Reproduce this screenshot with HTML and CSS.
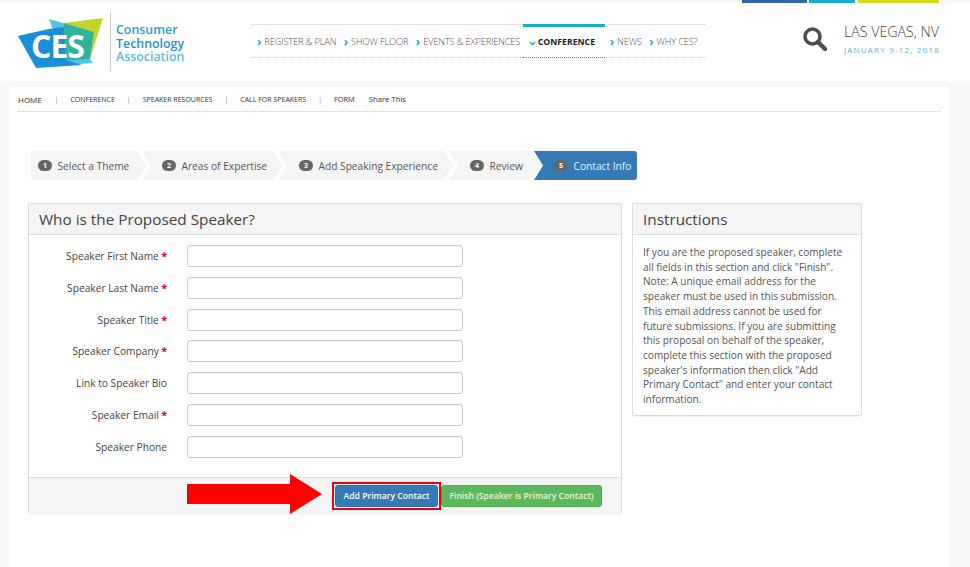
FILE: index.html
```html
<!DOCTYPE html>
<html lang="en">
<head>
    <meta charset="UTF-8">
    <meta name="viewport" content="width=device-width, initial-scale=1.0">
    <title>Call for Speakers - Contact Info</title>
    <link rel="stylesheet" href="styles.css">
</head>
<body>
    <div class="top-bars">
        <span class="bar bar-blue"></span>
        <span class="bar bar-teal"></span>
        <span class="bar bar-yellow"></span>
    </div>

    <header class="site-header">
        <div class="logo">
            <svg class="logo-mark" width="88" height="54" viewBox="0 0 88 54">
                <polygon points="31,1 76,14 72,41 75,45 48,47" fill="#56c2ea"/>
                <polygon points="46,5 85,0 72,41 76,14" fill="#c4d52a"/>
                <polygon points="46,5 76,14 72,41 48,42" fill="#2fb39a"/>
                <polygon points="0,18 31,11 46,9 48,42 64,47 18,50" fill="#1b8fd6"/>
                <text x="13" y="40" class="logo-ces">CES</text>
            </svg>
            <span class="logo-rule"></span>
            <div class="logo-name">
                <span class="name-1">Consumer</span>
                <span class="name-2">Technology</span>
                <span class="name-3">Association</span>
            </div>
        </div>

        <nav class="main-nav">
            <a href="#"><i>&rsaquo;</i>REGISTER &amp; PLAN</a>
            <a href="#"><i>&rsaquo;</i>SHOW FLOOR</a>
            <a href="#"><i>&rsaquo;</i>EVENTS &amp; EXPERIENCES</a>
            <a href="#" class="current"><svg width="7" height="5" viewBox="0 0 7 5"><path d="M1 1l2.5 2.5L6 1" fill="none" stroke="#19aecb" stroke-width="1.5"/></svg>CONFERENCE</a>
            <a href="#"><i>&rsaquo;</i>NEWS</a>
            <a href="#"><i>&rsaquo;</i>WHY CES?</a>
        </nav>

        <svg class="search-icon" width="26" height="26" viewBox="0 0 26 26">
            <circle cx="10.5" cy="10.5" r="7.5" fill="none" stroke="#4d4d4d" stroke-width="3.6"/>
            <path d="M16 16l7 7" stroke="#4d4d4d" stroke-width="4.4" stroke-linecap="round"/>
        </svg>

        <div class="event-info">
            <div class="event-city">LAS VEGAS, NV</div>
            <div class="event-date">JANUARY 9-12, 2018</div>
        </div>
    </header>

    <main class="content">
        <div class="breadcrumb">
            <a href="#" class="crumb-home">HOME</a><span>|</span>
            <a href="#">CONFERENCE</a><span>|</span>
            <a href="#">SPEAKER RESOURCES</a><span>|</span>
            <a href="#">CALL FOR SPEAKERS</a><span>|</span>
            <a href="#" class="crumb-form">FORM</a>
            <a href="#" class="crumb-share">Share This</a>
        </div>

        <ol class="steps">
            <li class="step step-first"><b>1</b>Select a Theme</li>
            <li class="step step-2"><b>2</b>Areas of Expertise</li>
            <li class="step step-3"><b>3</b>Add Speaking Experience</li>
            <li class="step step-4"><b>4</b>Review</li>
            <li class="step step-last"><b>5</b>Contact Info</li>
        </ol>

        <div class="columns">
            <section class="panel panel-form">
                <h2>Who is the Proposed Speaker?</h2>
                <form class="speaker-form">
                    <label>Speaker First Name <em>*</em></label><input type="text">
                    <label>Speaker Last Name <em>*</em></label><input type="text">
                    <label>Speaker Title <em>*</em></label><input type="text">
                    <label>Speaker Company <em>*</em></label><input type="text">
                    <label>Link to Speaker Bio</label><input type="text">
                    <label>Speaker Email <em>*</em></label><input type="text">
                    <label>Speaker Phone</label><input type="text">
                </form>
                <div class="panel-footer">
                    <svg class="red-arrow" width="135" height="40" viewBox="0 0 135 40">
                        <polygon points="0,10 103,10 103,0 135,20 103,40 103,30 0,30" fill="#fe0000"/>
                    </svg>
                    <span class="btn-highlight"><button type="button" class="btn btn-blue">Add Primary Contact</button></span>
                    <button type="button" class="btn btn-green">Finish (Speaker is Primary Contact)</button>
                </div>
            </section>

            <aside class="panel panel-help">
                <h2>Instructions</h2>
                <p>If you are the proposed speaker, complete all fields in this section and click "Finish". Note: A unique email address for the speaker must be used in this submission. This email address cannot be used for future submissions. If you are submitting this proposal on behalf of the speaker, complete this section with the proposed speaker's information then click "Add Primary Contact" and enter your contact information.</p>
            </aside>
        </div>
    </main>
</body>
</html>
```

FILE: styles.css
```css
* {
    box-sizing: border-box;
}
html, body {
    height: 100%;
}
body {
    margin: 0;
    height: 567px;
    overflow: hidden;
    background-color: #f8f8f8;
    font-family: "Open Sans", Arial, sans-serif;
    color: #444;
}

/* top colour strip */
.top-bars {
    display: flex;
    justify-content: flex-end;
    gap: 2px;
    height: 3px;
    padding-right: 31px;
}
.bar {
    height: 3px;
}
.bar-blue {
    width: 65px;
    background-color: #2f66ab;
}
.bar-teal {
    width: 46px;
    margin-right: 1px;
    background-color: #12aecb;
}
.bar-yellow {
    width: 81px;
    background-color: #d6db22;
}

/* header */
.site-header {
    display: flex;
    align-items: flex-start;
    height: 78px;
    background-color: #fff;
}
.logo {
    display: flex;
    width: 252px;
    padding: 15px 0 0 18px;
}
.logo-ces {
    font-family: "Open Sans", sans-serif;
    font-size: 32px;
    font-weight: 700;
    fill: #fff;
    letter-spacing: -1px;
}
.logo-rule {
    width: 1px;
    height: 59px;
    margin: -6px 5px 0 4px;
    background-color: #c9c9c9;
}
.logo-name {
    display: flex;
    flex-direction: column;
    padding-top: 5px;
    font-size: 12.4px;
    font-weight: 600;
    line-height: 13.5px;
}
.name-1 {
    color: #2f9ad6;
}
.name-2 {
    color: #2a8fd0;
}
.name-3 {
    color: #5cbcdf;
}

.main-nav {
    display: flex;
    width: 453px;
    height: 34px;
    margin-top: 21px;
    border-top: 1px dotted #c9c9c9;
    border-bottom: 1px dotted #c9c9c9;
    padding-left: 5px;
}
.main-nav a {
    display: flex;
    align-items: center;
    margin-right: 7.5px;
    font-size: 9.3px;
    font-weight: 300;
    letter-spacing: -.15px;
    color: #555;
    text-decoration: none;
    white-space: nowrap;
}
.main-nav i {
    margin-right: 3px;
    font-size: 12px;
    font-style: normal;
    font-weight: 700;
    color: #19aecb;
}
.main-nav .current {
    width: 86px;
    height: 34px;
    margin: -1px 5px -1px -5px;
    border-top: 3px solid #12aecb;
    border-bottom: 1px dotted #12aecb;
    padding-left: 6px;
    font-weight: 700;
    font-size: 8.7px;
    letter-spacing: 0;
    color: #222;
}
.main-nav .current svg {
    margin: 2px 2px 0 0;
}

.search-icon {
    margin: 23px 0 0 97px;
}
.event-info {
    margin: 20px 0 0 16px;
}
.event-city {
    font-size: 14.2px;
    font-weight: 300;
    line-height: 18px;
    color: #444;
    white-space: nowrap;
}
.event-date {
    margin-top: 3px;
    font-size: 8px;
    letter-spacing: 1.2px;
    line-height: 11px;
    color: #5db5c8;
    white-space: nowrap;
}

/* page body */
.content {
    height: 480px;
    margin: 6px 21px 0 9px;
    padding: 0 9px 0 9px;
    background-color: #fff;
}
.breadcrumb {
    display: flex;
    align-items: center;
    height: 25px;
    border-bottom: 1px dotted #ccc;
    font-size: 7px;
    color: #444;
}
.breadcrumb a {
    color: #333;
    text-decoration: none;
    white-space: nowrap;
}
.breadcrumb span {
    margin: 0 12px;
    color: #888;
}
.breadcrumb .crumb-home {
    margin-right: .8px;
    font-size: 8px;
}
.breadcrumb .crumb-form {
    font-size: 7.4px;
}
.breadcrumb .crumb-share {
    margin-left: 14px;
    font-size: 7.7px;
}

/* wizard steps */
.steps {
    display: flex;
    height: 29px;
    margin: 39px 0 0 13px;
    padding: 0;
    list-style: none;
}
.step {
    display: flex;
    align-items: center;
    height: 29px;
    font-size: 10.2px;
    color: #555;
    background-color: #f5f5f5;
    white-space: nowrap;
    clip-path: polygon(0 0, calc(100% - 9px) 0, 100% 50%, calc(100% - 9px) 100%, 0 100%, 9px 50%);
    margin-right: -4px;
}
.step b {
    display: inline-block;
    width: 14px;
    height: 11px;
    margin-right: 5.5px;
    border-radius: 6px;
    background-color: #666;
    color: #fff;
    font-size: 7px;
    line-height: 11px;
    text-align: center;
}
.step-first {
    width: 115px;
    padding-left: 7px;
    border-radius: 3px 0 0 3px;
    clip-path: polygon(0 0, calc(100% - 9px) 0, 100% 50%, calc(100% - 9px) 100%, 0 100%);
}
.step-2 {
    width: 140px;
    padding-left: 20px;
}
.step-3 {
    width: 175px;
    padding-left: 21px;
}
.step-4 {
    width: 92px;
    padding-left: 21px;
}
.step-last {
    width: 103px;
    margin-left: -3px;
    margin-right: 0;
    padding-left: 20px;
    border-radius: 0 3px 3px 0;
    background-color: #337ab7;
    color: #e6f1fa;
    clip-path: polygon(0 0, 100% 0, 100% 100%, 0 100%, 9px 50%);
}

/* panels */
.columns {
    display: flex;
    align-items: flex-start;
    gap: 10px;
    margin: 23px 0 0 10px;
}
.panel {
    border: 1px solid #ddd;
    border-radius: 2px;
    box-shadow: 0 1px 1px rgba(0, 0, 0, .05);
    background-color: #fff;
}
.panel h2 {
    height: 31px;
    margin: 0;
    border-bottom: 1px solid #ddd;
    padding: 0 10px;
    background-color: #f5f5f5;
    font-size: 15.3px;
    font-weight: 400;
    line-height: 30px;
    color: #444;
    white-space: nowrap;
}
.panel-form {
    width: 594px;
    height: 311px;
}
.panel-help {
    width: 230px;
    height: 213px;
}
.panel-help p {
    margin: 0;
    padding: 10px 10px 0;
    font-size: 10.1px;
    line-height: 14.7px;
    color: #555;
}

.speaker-form {
    display: grid;
    grid-template-columns: 138px 276px;
    grid-auto-rows: 22px;
    column-gap: 20px;
    row-gap: 9.8px;
    align-items: center;
    height: 242px;
    padding: 10px 0 0 0;
}
.speaker-form label {
    font-size: 10.2px;
    font-weight: 500;
    color: #444;
    text-align: right;
    white-space: nowrap;
}
.speaker-form em {
    font-style: normal;
    font-weight: 700;
    color: #d0021b;
}
.speaker-form input {
    width: 276px;
    height: 22px;
    border: 1px solid #ccc;
    border-radius: 3px;
    box-shadow: inset 0 1px 1px rgba(0, 0, 0, .07);
    background-color: #fff;
}

.panel-footer {
    position: relative;
    display: flex;
    align-items: center;
    height: 37px;
    border-top: 1px solid #ddd;
    padding-left: 306px;
    background-color: #f5f5f5;
}
.red-arrow {
    position: absolute;
    left: 158px;
    top: -4px;
}
.btn-highlight {
    display: flex;
    margin-right: 3px;
    outline: 2px solid #e8000b;
    outline-offset: 1px;
}
.btn {
    height: 22px;
    border-radius: 3px;
    padding: 0;
    font-family: "Open Sans", Arial, sans-serif;
    font-size: 8.6px;
    font-weight: 600;
    color: #fff;
    cursor: pointer;
}
.btn-blue {
    width: 103px;
    border: 1px solid #2e6da4;
    background-color: #337ab7;
}
.btn-green {
    width: 161px;
    border: 1px solid #4cae4c;
    background-color: #5cb85c;
    color: #e8f5d8;
}
```
